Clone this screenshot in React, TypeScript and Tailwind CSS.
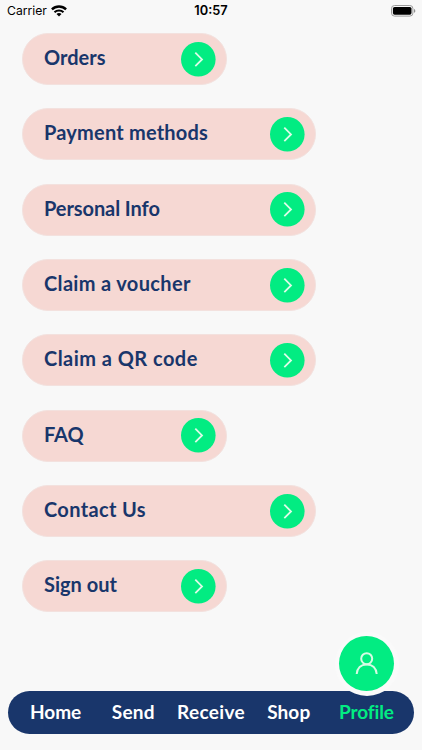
import clsx from "clsx";

type MenuItem = {
  label: string;
  wide?: boolean;
  tracking: string;
};

const menuItems: MenuItem[] = [
  { label: "Orders", tracking: "tracking-normal" },
  { label: "Payment methods", wide: true, tracking: "tracking-[0.2px]" },
  { label: "Personal Info", wide: true, tracking: "tracking-[-0.08px]" },
  { label: "Claim a voucher", wide: true, tracking: "tracking-[0.34px]" },
  { label: "Claim a QR code", wide: true, tracking: "tracking-[0.46px]" },
  { label: "FAQ", tracking: "tracking-[-0.1px]" },
  { label: "Contact Us", wide: true, tracking: "tracking-[0.34px]" },
  { label: "Sign out", tracking: "tracking-normal" },
];

const tabs = [
  { label: "Home", tracking: "tracking-normal" },
  { label: "Send", tracking: "tracking-[0.2px]" },
  { label: "Receive", tracking: "tracking-[0.35px]" },
  { label: "Shop", tracking: "tracking-[0.1px]" },
  { label: "Profile", tracking: "tracking-[-0.1px]" },
];

function WifiIcon() {
  return (
    <svg width="16" height="12" viewBox="0 0 16 12" fill="none">
      <path d="M.9 4.4C4.9 .6 11.1 .6 15.1 4.4" stroke="#000" strokeWidth="2.4" />
      <path d="M3.5 7.2C6 4.9 10 4.9 12.5 7.2" stroke="#000" strokeWidth="2.2" />
      <path d="M8 11.4L5.5 9C7 7.7 9 7.7 10.5 9Z" fill="#000" />
    </svg>
  );
}

function BatteryIcon() {
  return (
    <svg width="25" height="12" viewBox="0 0 25 12" fill="none">
      <rect x="0.5" y="0.5" width="21.4" height="10.6" rx="3" stroke="#9b9b9b" />
      <rect x="1.9" y="1.9" width="18.6" height="7.8" rx="1.7" fill="#000" />
      <path d="M23 4v3.8c.8-.3 1.3-1 1.3-1.9S23.8 4.3 23 4Z" fill="#8f8f8f" />
    </svg>
  );
}

function StatusBar() {
  return (
    <div className="grid h-[22px] grid-cols-3 items-center pr-[6px] pl-[7px] font-['Inter',sans-serif] text-black">
      <div className="flex items-center gap-1">
        <span className="text-[12.2px]">Carrier</span>
        <WifiIcon />
      </div>
      <span className="-ml-px text-center text-[12.8px] font-semibold">
        10:57
      </span>
      <div className="flex justify-end">
        <BatteryIcon />
      </div>
    </div>
  );
}

function MenuButton({ label, wide, tracking }: MenuItem) {
  return (
    <button
      className={clsx(
        "flex h-[52px] items-center justify-between rounded-full border border-[#f3e1de] bg-[#f6d8d3] pr-[10px] pl-[21px]",
        wide ? "w-[294.4px]" : "w-[205.4px]"
      )}
    >
      <span
        className={clsx(
          "-mt-1 text-[20px] leading-6 font-bold whitespace-nowrap text-[#19366b]",
          tracking
        )}
      >
        {label}
      </span>
      <svg width="35" height="35" viewBox="0 0 35 35" fill="none">
        <circle cx="17.3" cy="17.3" r="17.3" fill="#02ec82" />
        <path
          d="M14.3 10.7L21 17.4L14.3 24.1"
          stroke="#defbe8"
          strokeWidth="1.8"
        />
      </svg>
    </button>
  );
}

function TabBar() {
  return (
    <nav className="relative mx-2 grid h-[43px] grid-cols-5 items-center rounded-full bg-[#19366b] px-[8.7px]">
      {/* raised bubble for the active tab */}
      <div className="absolute -top-[59px] right-[15.5px] flex size-16 items-center justify-center rounded-full bg-[#fafafa]">
        <div className="flex size-[55.4px] items-center justify-center rounded-full bg-[#02ec82]">
          <svg width="24" height="24" viewBox="0 0 24 24" fill="none">
            <circle cx="12.7" cy="7.7" r="5.5" stroke="#d6fbe4" strokeWidth="2" />
            <path
              d="M2.7 23C3.1 17.2 6.9 13.4 12.7 13.4S22.3 17.2 22.7 23"
              stroke="#d6fbe4"
              strokeWidth="2"
            />
          </svg>
        </div>
      </div>
      {tabs.map((tab) => (
        <span
          key={tab.label}
          className={clsx(
            "relative text-center text-[19px] leading-6 font-bold whitespace-nowrap",
            tab.tracking,
            tab.label === "Profile" ? "text-[#02ec82]" : "text-white"
          )}
        >
          {tab.label}
        </span>
      ))}
    </nav>
  );
}

export default function App() {
  return (
    <div className="flex h-[750px] w-[422px] flex-col overflow-hidden bg-[#f8f8f8] font-['Lato',sans-serif]">
      <StatusBar />
      <main className="flex flex-1 flex-col gap-[23.35px] pt-[11px] pl-[22px]">
        {menuItems.map((item) => (
          <MenuButton key={item.label} {...item} />
        ))}
      </main>
      <TabBar />
      <div className="h-[16.5px] shrink-0" />
    </div>
  );
}
